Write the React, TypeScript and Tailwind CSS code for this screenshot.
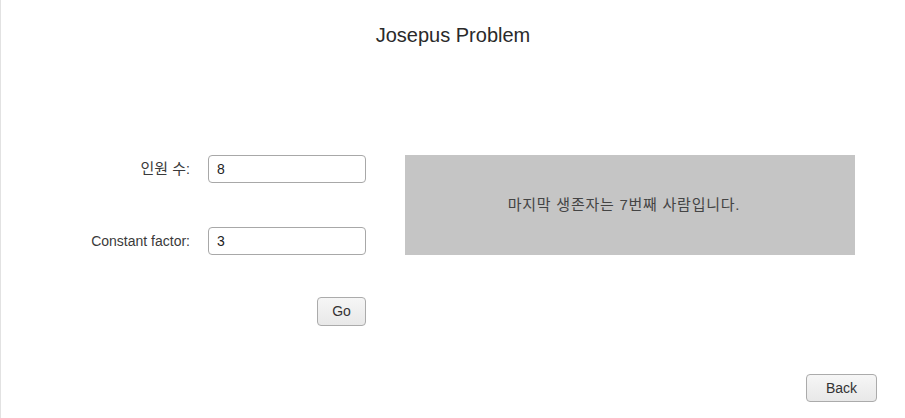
const font = "font-['Liberation_Sans','Noto_Sans_CJK_KR',sans-serif]"

export default function App() {
  return (
    <div
      className={`w-[905px] h-[418px] bg-white border-l border-[#e2e2e2] flex flex-col text-[#333] ${font}`}
    >
      <h1 className="pt-[24px] text-center text-[20px] leading-[22px] text-[#2a2a2a]">
        Josepus Problem
      </h1>

      <div className="mt-[109px] flex items-start">
        <div className="ml-[79px] flex flex-col">
          <div className="grid grid-cols-[110px_158px] gap-x-[18px] gap-y-[44px] items-center text-[14px]">
            <label className="text-right text-[#3a3a3a]">
              <span className="text-[15px]">인원 수</span>:
            </label>
            <input
              defaultValue="8"
              className="h-[28px] w-[158px] rounded-[4px] border border-[#a8a8a8] bg-white px-[8px] text-[14px] text-[#222] outline-none"
            />
            <label className="text-right text-[#3a3a3a]">Constant factor:</label>
            <input
              defaultValue="3"
              className="h-[28px] w-[158px] rounded-[4px] border border-[#a8a8a8] bg-white px-[8px] text-[14px] text-[#222] outline-none"
            />
          </div>
          <div className="mt-[42px] flex justify-end">
            <button className="h-[29px] w-[49px] rounded-[4px] border border-[#ababab] bg-gradient-to-b from-[#f6f6f6] to-[#e8e8e8] text-[14px] text-[#333]">
              Go
            </button>
          </div>
        </div>

        <div className="ml-[39px] flex h-[100px] w-[450px] items-center justify-center bg-[#c5c5c5] pr-[12px] text-[15px] tracking-[0.75px] text-[#444]">
          마지막 생존자는 7번째 사람입니다.
        </div>
      </div>

      <div className="mt-auto mb-[16px] mr-[28px] flex justify-end">
        <button className="h-[28px] w-[71px] rounded-[4px] border border-[#ababab] bg-gradient-to-b from-[#f6f6f6] to-[#e8e8e8] text-[14px] text-[#333]">
          Back
        </button>
      </div>
    </div>
  )
}
